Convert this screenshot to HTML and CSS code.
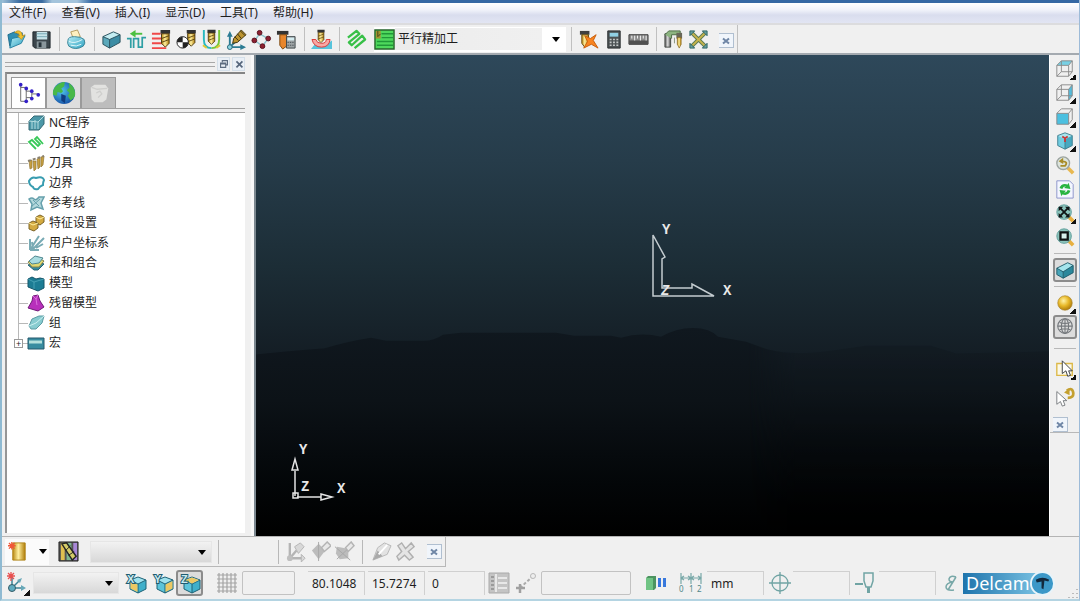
FILE: index.html
```html
<!DOCTYPE html>
<html lang="zh-CN">
<head>
<meta charset="utf-8">
<title>Delcam</title>
<link rel="stylesheet" href="styles.css">
</head>
<body>
<svg class="defs" aria-hidden="true">
  <defs>
    <linearGradient id="gold" x1="0" x2="1" y1="0" y2="0"><stop offset="0" stop-color="#b98a12"/><stop offset=".45" stop-color="#fff0a0"/><stop offset="1" stop-color="#b07c08"/></linearGradient>
    <linearGradient id="cyan" x1="0" x2="1" y1="0" y2="1"><stop offset="0" stop-color="#b8eef6"/><stop offset="1" stop-color="#2a9fc0"/></linearGradient>
    <linearGradient id="steel" x1="0" x2="1" y1="0" y2="0"><stop offset="0" stop-color="#555"/><stop offset=".5" stop-color="#ddd"/><stop offset="1" stop-color="#444"/></linearGradient>
    <radialGradient id="ball" cx=".4" cy=".35" r=".7"><stop offset="0" stop-color="#fff3a8"/><stop offset=".5" stop-color="#e8b828"/><stop offset="1" stop-color="#a87408"/></radialGradient>
    <radialGradient id="globe" cx=".4" cy=".4" r=".65"><stop offset="0" stop-color="#4fc4e8"/><stop offset="1" stop-color="#1450a8"/></radialGradient>
    <symbol id="tool" viewBox="0 0 12 20"><path d="M1 1h10v4H1z" fill="#333"/><path d="M2 5h8v10l-4 4-4-4z" fill="url(#gold)" stroke="#4a3810"/><path d="M2 10l8-3M2 14l8-3" stroke="#5a4510" fill="none"/></symbol>
    <symbol id="close" viewBox="0 0 14 14"><path d="M4 4.500l6 5M10 4.500l-6 5" stroke="#6f86a6" stroke-width="2"/></symbol>
    <symbol id="axiscube" viewBox="0 0 22 22"><path d="M13 5l8 3-8 4-8-4z" fill="#9fe2ee"/><path d="M5 8l8 4v9l-8-4z" fill="#5cc4da"/><path d="M21 8l-8 4v9l8-4z" fill="#3fafca"/><path d="M13 5l8 3v9l-8 4-8-4V8zM5 8l8 4 8-4M13 12v9" fill="none" stroke="#1c6277"/></symbol>
  </defs>
</svg>
<div class="window">
  <div class="titlebar"></div>
  <nav class="menubar" aria-label="菜单">
    <button>文件(F)</button><button>查看(V)</button><button>插入(I)</button><button>显示(D)</button><button>工具(T)</button><button>帮助(H)</button>
  </nav>

  <div class="toolbar" role="toolbar" aria-label="主工具栏">
    <button class="tb" aria-label="打开"><svg viewBox="0 0 22 22"><path d="M2 6l7-3 3 2 5-1v7L4 18z" fill="#2f8fb4" stroke="#1e6c8c"/><path d="M6 10l14-3-4 8-12 5z" fill="url(#cyan)" stroke="#2580a0"/><path d="M9 4c3-4 8-2 8 3l3-1-4 5-4-4 2 0c0-2-2-3-5-3z" fill="#f0c030" stroke="#b08010" stroke-width=".6"/></svg></button>
    <button class="tb" aria-label="保存"><svg viewBox="0 0 22 22"><path d="M2 3h18v17H4l-2-2z" fill="#3c464c" stroke="#20282c"/><path d="M6 3h11v8H6z" fill="#c8e4ea"/><path d="M6 5h11M6 8h11" stroke="#78a8b4"/><path d="M6 13h10v7H6z" fill="#8a979c"/><path d="M8 14h3v5H8z" fill="#26333a"/></svg></button>
    <i class="sep"></i>
    <button class="tb" aria-label="打印"><svg viewBox="0 0 22 22"><path d="M5 3l7-2 3 7-7 3z" fill="#fff0c0" stroke="#b39a60"/><path d="M2 12q0-4 7-4t10 3q2 4-1 7-8 5-15 0-2-3-1-6z" fill="url(#cyan)" stroke="#3c8496"/><path d="M3 13q6 3 14-2M5 17q6 2 11-1" stroke="#e4f8fa" fill="none"/></svg></button>
    <i class="sep"></i>
    <button class="tb" aria-label="毛坯"><svg viewBox="0 0 22 22"><path d="M2 8l11-5 7 3-11 5z" fill="#c4edf2"/><path d="M2 8l7 3v9l-7-4z" fill="#5ba8ba"/><path d="M9 11l11-5v8L9 20z" fill="#3c8ca4"/><path d="M2 8l11-5 7 3v8L9 20l-7-4zM2 8l7 3 11-5M9 11v9" stroke="#28505c" fill="none"/></svg></button>
    <button class="tb" aria-label="快进高度"><svg viewBox="0 0 22 22"><path d="M1 10h4v10M8 20V10h5v9h4V9h4" stroke="#2f9fa4" stroke-width="1.800" fill="none"/><path d="M8 5h9" stroke="#4cc040" stroke-width="2"/><path d="M10 1L4 5l6 4z" fill="#4cc040"/></svg></button>
    <button class="tb" aria-label="切入切出"><svg viewBox="0 0 22 22"><path d="M1 5h9M1 10h10M1 15h12M1 20h15" stroke="#f04848" stroke-width="2"/><use href="#tool" x="9" y="0" width="12" height="20"/></svg></button>
    <button class="tb" aria-label="开始点"><svg viewBox="0 0 22 22"><use href="#tool" x="10" y="0" width="12" height="19"/><circle cx="7" cy="14" r="6" fill="#fff" stroke="#222"/><path d="M7 8a6 6 0 0 0-6 6h6zM7 14h6a6 6 0 0 1-6 6z" fill="#222"/></svg></button>
    <button class="tb" aria-label="切削"><svg viewBox="0 0 22 22"><path d="M3 1v10q0 9 8 9" stroke="#28b8c0" stroke-width="2" fill="none"/><path d="M19 1v10q0 9-8 9" stroke="#78c838" stroke-width="2" fill="none"/><use href="#tool" x="5" y="0" width="12" height="17"/><path d="M2 17l4 3M20 17l-4 3" stroke="#e0c838" stroke-width="2"/></svg></button>
    <button class="tb" aria-label="刀轴"><svg viewBox="0 0 22 22"><path d="M4 19V6M4 19h15M4 19l7-7" stroke="#2c7c94" stroke-width="2"/><path d="M4 2L1 8h6zM21 19l-6-3v6z" fill="#2c7c94"/><circle cx="4" cy="19" r="2.500" fill="#8cd4e0" stroke="#246478"/><path d="M16 1l5 5-9 8-5 1 1-5z" fill="#bc9430" stroke="#403410"/><path d="M15 2l5 5M12 5l4 5M9 8l4 4" stroke="#403410"/></svg></button>
    <button class="tb" aria-label="点分布"><svg viewBox="0 0 22 22"><path d="M4 12l5-7M12 18l6-8M9 5l9 5M4 12l8 6" stroke="#8cc4cc" stroke-width="1.500"/><g fill="#8c2030" stroke="#58101c"><circle cx="9" cy="4" r="2.500"/><circle cx="18" cy="10" r="2.500"/><circle cx="3.500" cy="12" r="2.500"/><circle cx="12" cy="18" r="2.500"/></g></svg></button>
    <button class="tb" aria-label="进给率"><svg viewBox="0 0 22 22"><path d="M1 2h12v4H1z" fill="#343434"/><path d="M4 6h7v12l-4 3-3-4z" fill="#e8862c" stroke="#7c4810"/><path d="M11 8h9v12h-9z" fill="#9ea4a6" stroke="#40484c"/><path d="M12 9h7v3h-7z" fill="#d4ecf0"/><path d="M12 14h7M12 17h7" stroke="#485054" stroke-dasharray="1.500 1"/></svg></button>
    <i class="sep"></i>
    <button class="tb" aria-label="碰撞检查"><svg viewBox="0 0 22 22"><path d="M0 21l4-5h12l6-4v9z" fill="#58c4dc"/><path d="M1 11h4q1 4 6 4t5-4h4q-1 8-9 8T1 11z" fill="#f8a8a4" stroke="#d83838"/><use href="#tool" x="5" y="0" width="11" height="15"/></svg></button>
    <i class="sep"></i>
    <button class="tb" aria-label="刀具路径策略"><svg viewBox="0 0 22 22"><path d="M2 9L11 2l3 3L3 14l3 3L17 7l3 4L9 20" stroke="#38c048" stroke-width="2.400" stroke-linejoin="round" fill="none"/></svg></button>
    <div class="strategy">
      <svg viewBox="0 0 22 22"><path d="M1 1h20v20H1z" fill="#4ed85c" stroke="#28642c" stroke-width="1.500"/><path d="M8 5h12M8 9h12M3 13h17M3 17h17" stroke="#209838" stroke-width="1.500"/><path d="M2 2h5v8H2z" fill="#a49430"/><path d="M4 2v6l3-3" stroke="#40481c" fill="none"/></svg>
      <span class="combo"><select class="strategy-select" aria-label="策略"><option>平行精加工</option></select><svg class="caret" viewBox="0 0 8 5"><path d="M0 0h8L4 5z"/></svg></span>
    </div>
    <i class="sep"></i>
    <button class="tb" aria-label="删除刀具"><svg viewBox="0 0 22 22"><path d="M2 2h10v4H2z" fill="#404040"/><path d="M4 6h7v10l-4 3-3-4z" fill="url(#gold)" stroke="#684c10"/><path d="M7 7l6 3 6-4-3 6 5 8-7-4-8 4 4-7z" fill="#f88420" stroke="#c85c08"/></svg></button>
    <button class="tb" aria-label="计算器"><svg viewBox="0 0 22 22"><path d="M5 2h13v18H5z" fill="#4c5254" stroke="#282c2e"/><path d="M7 4h9v4H7z" fill="#90d0e4"/><path d="M7 11h9M7 14h9M7 17h9" stroke="#c4c8c8" stroke-width="1.600" stroke-dasharray="2 1.500"/></svg></button>
    <button class="tb" aria-label="测量"><svg viewBox="0 0 22 22"><path d="M1 6h20v10H1z" fill="#8c8c8c" stroke="#383838"/><path d="M1 12h20v4H1z" fill="#505050"/><path d="M4 7v3M7 7v5M10 7v3M13 7v5M16 7v3M19 7v5" stroke="#f4f4f4"/></svg></button>
    <i class="sep"></i>
    <button class="tb" aria-label="机床"><svg viewBox="0 0 22 22"><path d="M2 5h6v14H2z" fill="url(#steel)" stroke="#484c48"/><path d="M2 6l4-4h12v4H9v4" fill="#8cb480" stroke="#4c6c44"/><path d="M14 4h6v6h-6z" fill="#686858"/><path d="M15 9h4v7l-2 4-2-4z" fill="url(#gold)" stroke="#84641c" stroke-width=".7"/><path d="M12 9v6" stroke="#889480"/></svg></button>
    <button class="tb" aria-label="仿真"><svg viewBox="0 0 22 22"><path d="M4 4l14 14M18 4L4 18" stroke="#5c7c54" stroke-width="4"/><path d="M4 4l14 14M18 4L4 18" stroke="#c8b44c" stroke-width="2"/><path d="M2 2h5L2 7zM20 2v5l-5-5zM2 20v-5l5 5zM20 20h-5l5-5z" fill="#68a0a0" stroke="#2c6464"/></svg></button>
    <button class="mini" aria-label="关闭工具栏"><svg><use href="#close"/></svg></button>
    <i class="sep edge"></i>
  </div>

  <div class="workspace">
    <aside class="explorer">
      <div class="dock">
        <i class="grip"></i>
        <button class="dock-btn" aria-label="浮动"><svg viewBox="0 0 14 14"><path d="M5 5V3h6v5H9M3 6h6v5H3zM3 7h6" stroke="#5c6c80" stroke-width="1.300" fill="none"/></svg></button>
        <button class="dock-btn" aria-label="关闭"><svg viewBox="0 0 14 14"><path d="M4 4l7 7M11 4l-7 7" stroke="#56667c" stroke-width="2"/></svg></button>
      </div>
      <div class="pane">
        <div class="tabs" role="tablist">
          <button class="tab active" role="tab" aria-label="浏览器"><svg viewBox="0 0 26 26"><path d="M4 4v18h6M4 7h6v4h6M10 10v12M10 18h6M16 11v3h8M16 18v-4" fill="none" stroke="#666"/><g fill="#3420c8"><circle cx="4" cy="4" r="2"/><circle cx="10" cy="8" r="2"/><circle cx="16" cy="11" r="2"/><circle cx="23" cy="15" r="2"/><circle cx="16" cy="19" r="2"/><circle cx="10" cy="22" r="2"/></g></svg></button>
          <button class="tab" role="tab" aria-label="网络"><svg viewBox="0 0 26 26"><circle cx="13" cy="13" r="12" fill="url(#globe)"/><path d="M3 7q5-6 11-6l-1 5-3 2 2 3-2 2-4-1-1 4-4-1q-1-4 2-8zM18 2q6 4 7 10t-5 9l-3-5 2-3-3-3 3-3z" fill="#48b848"/><path d="M10 14l5 2-1 8-4-3z" fill="#103c80"/></svg></button>
          <button class="tab disabled" role="tab" aria-label="回收站"><svg viewBox="0 0 26 26"><path d="M4 7l4-3 12 0 3 4-2 12-4 3H8l-3-3z" fill="#e2e2e0"/><path d="M5 7l6 2 11-1M10 13l4-2 2 3-4 4" fill="none" stroke="#cfcfcd" stroke-width="1.500"/></svg></button>
        </div>
        <ul class="tree" role="tree">
          <li role="treeitem"><svg viewBox="0 0 18 18"><path d="M2 7l5-5 10 0v8l-5 6H2z" fill="#4c98a8" stroke="#346874"/><path d="M5 7v8M8 6v9M2 7l9 1 6-6M11 8v7" stroke="#b4dce0" fill="none"/></svg>NC程序</li>
          <li role="treeitem"><svg viewBox="0 0 18 18"><path d="M9 15L2 8l3-2 6 6 2-2-5-5 2-2 6 7" stroke="#38c858" stroke-width="1.800" fill="none"/></svg>刀具路径</li>
          <li role="treeitem"><svg viewBox="0 0 18 18"><path d="M2 7l3-1v8l-2 1zM6 7h3v8l-2 2zM10 5l3-1v9l-2 2zM14 3l3-1-1 9-2 2z" fill="#c8a040" stroke="#947838" stroke-width=".7"/><path d="M1 7l16-5" stroke="#888070" stroke-dasharray="3 2" stroke-width="2"/></svg>刀具</li>
          <li role="treeitem"><svg viewBox="0 0 18 18"><path d="M2 7q3-5 7-3 7-2 8 2-1 2-1 5-3 1-5 4-4 1-5-2-4-2-4-6z" fill="none" stroke="#389cb0" stroke-width="2"/></svg>边界</li>
          <li role="treeitem"><svg viewBox="0 0 18 18"><path d="M2 5q3-2 5 0t5-2h5l-3 6 2 6-6-2-6 3 1-6-3-5z" fill="#b4d8dc" stroke="#66a0ac" stroke-width="1.500"/><path d="M4 13l9-8M6 6l6 6" stroke="#66a0ac"/></svg>参考线</li>
          <li role="treeitem"><svg viewBox="0 0 18 18"><path d="M9 3l4-2 4 2v5l-4 3-4-2zM2 9l4-2 5 2v5l-4 3-5-2z" fill="#d4aa40" stroke="#7c6428"/><path d="M2 9l4 2 5-2M9 3l4 2 4-2" stroke="#fff0a0" fill="none"/></svg>特征设置</li>
          <li role="treeitem"><svg viewBox="0 0 18 18"><path d="M3 16V5M3 16h9M3 16L12 2M6 15l11-11M5 8l1 7M9 14l7-4" stroke="#78aab4" stroke-width="2" fill="none"/></svg>用户坐标系</li>
          <li role="treeitem"><svg viewBox="0 0 18 18"><path d="M1 11l9-4 7 3-6 6-4 0z" fill="#348ca0" stroke="#286474"/><path d="M1 8l9-5 7 4-5 6-7 0z" fill="#e0d870" stroke="#84844c"/><path d="M2 7l6-5 8 2-4 5-7 1z" fill="#a8dce0" stroke="#508890"/></svg>层和组合</li>
          <li role="treeitem"><svg viewBox="0 0 18 18"><path d="M1 5l4-2 4 2 4-1 4 1v9l-6 3-10-4z" fill="#1c7c94" stroke="#145468"/><path d="M1 5l6 3 10-3M7 8v7" stroke="#60b8c8" stroke-opacity=".6" fill="none"/></svg>模型</li>
          <li role="treeitem"><svg viewBox="0 0 18 18"><path d="M6 2l5-1 2 6 4 6-6 4-10-3 4-7z" fill="#b830bc" stroke="#701c78"/><path d="M6 2l3 3 2-4M9 5l1 6" stroke="#dc70dc" fill="none"/></svg>残留模型</li>
          <li role="treeitem"><svg viewBox="0 0 18 18"><path d="M2 12l3-7 7-3h5l-2 7-6 6H4z" fill="#88ccd0" stroke="#5c9ca4"/><path d="M2 12l7-3 8-7" stroke="#ccf0f0" fill="none"/></svg>组</li>
          <li role="treeitem" class="last" aria-expanded="false"><button class="expander" aria-label="展开">+</button><svg viewBox="0 0 18 18"><path d="M1 4h16v11H1z" fill="#388ca0" stroke="#24586c"/><path d="M2 8h13" stroke="#b4e0dc" stroke-width="3"/></svg>宏</li>
        </ul>
      </div>
    </aside>

    <main class="view">
      <svg class="horizon" viewBox="0 0 793 215" preserveAspectRatio="none"><defs><linearGradient id="ground" x1="0" x2="0" y1="0" y2="1"><stop offset="0" stop-color="#10181f"/><stop offset=".35" stop-color="#0c1217"/><stop offset=".75" stop-color="#030608"/><stop offset="1" stop-color="#000"/></linearGradient></defs><path d="M0 31Q50 26 68 25Q90 18 115 14L130 17H165Q177 18 187 11L205 9H300L318 12H355L365 14Q385 8 405 13Q420 4 437 4T462 13L490 18L512 26Q535 32 570 28L610 22H675L700 30L793 28V215H0z" fill="url(#ground)"/></svg>
      <svg class="workplane" viewBox="0 0 90 80" aria-label="坐标系"><g fill="none" stroke="#c4ccd0" stroke-width="1.500"><path d="M4 12V73H65L43 61V65H13V36L16 34Z"/></g><g class="axis-text"><text x="13" y="11">Y</text><text x="74" y="72">X</text><text x="12" y="72" font-style="italic">Z</text></g></svg>
      <svg class="triad" viewBox="0 0 60 66" aria-label="视图方向"><g fill="none" stroke="#e4e4e4" stroke-width="1.500"><path d="M6 55V30M8 56H32M3 29L6 18L9 29ZM32 53L43 56L32 59ZM4 52h5v5H4z"/></g><g class="axis-text"><text x="10" y="13">Y</text><text x="12" y="50">Z</text><text x="48" y="52">X</text></g></svg>
    </main>

    <div class="viewbar" role="toolbar" aria-label="查看工具栏" aria-orientation="vertical">
      <button class="vb more" aria-label="顶视图"><svg viewBox="0 0 22 22"><path d="M2 7l5-5h12l-4 5z" fill="#78d0e4"/><path d="M2 7h13v12H2zM2 7l5-5h12l-4 5M19 2v12l-4 5M7 2v12L2 19M7 14h12" fill="none" stroke="#888"/></svg></button>
      <button class="vb more" aria-label="右视图"><svg viewBox="0 0 22 22"><path d="M15 7l4-5v12l-4 5z" fill="#54bcdc"/><path d="M2 7h13v12H2zM2 7l5-5h12l-4 5M19 2v12l-4 5M7 2v12L2 19M7 14h12" fill="none" stroke="#888"/></svg></button>
      <button class="vb more" aria-label="前视图"><svg viewBox="0 0 22 22"><path d="M2 7h13v12H2z" fill="#4cc0e0"/><path d="M2 7h13v12H2zM2 7l5-5h12l-4 5M19 2v12l-4 5" fill="none" stroke="#888"/></svg></button>
      <button class="vb more" aria-label="等轴视图"><svg viewBox="0 0 22 22"><path d="M11 2l8 3-8 4-8-4z" fill="#a8e4ec"/><path d="M3 5l8 4v11l-8-4z" fill="#70cce0"/><path d="M19 5l-8 4v11l8-4z" fill="#48a8c0"/><path d="M11 2l8 3v11l-8 4-8-4V5zM11 9v11" fill="none" stroke="#3c7c8c"/><path d="M11 8v4M8 6l3 2 3-2" stroke="#c83838" stroke-width="2" fill="none"/></svg></button>
      <button class="vb" aria-label="上一视图"><svg viewBox="0 0 22 22"><path d="M14 14l6 6" stroke="#e8b850" stroke-width="4"/><circle cx="9" cy="9" r="7" fill="#dce4dc" stroke="#9ca4a0" stroke-width="1.500"/><path d="M6 12h5q4-5-3-5" fill="none" stroke="#a88c28" stroke-width="2"/><path d="M4 7l5-4v7z" fill="#a88c28"/></svg></button>
      <button class="vb" aria-label="刷新"><svg viewBox="0 0 22 22"><path d="M2 2h14l4 4v15H2z" fill="#f4f6ff" stroke="#8890c8"/><path d="M5 10q2-6 9-4l1-2 2 7-7-1 2-2q-3 0-4 3zM17 13q-2 6-9 4l-1 2-2-7 7 1-2 2q3 0 4-3z" fill="#28b440"/></svg></button>
      <button class="vb more" aria-label="全屏重画"><svg viewBox="0 0 22 22"><path d="M15 15l5 5" stroke="#e8b040" stroke-width="4"/><circle cx="10" cy="10" r="8" fill="#8cc4bc" stroke="#5c9c98"/><path d="M6 6l8 8M14 6l-8 8" stroke="#101414" stroke-width="2"/><path d="M4 4h5L4 9zM16 4v5l-5-5zM4 16v-5l5 5zM16 16h-5l5-5z" fill="#101414"/></svg></button>
      <button class="vb" aria-label="方框放大"><svg viewBox="0 0 22 22"><path d="M15 15l5 5" stroke="#e8b040" stroke-width="4"/><circle cx="10" cy="10" r="8" fill="#8cc4bc" stroke="#5c9c98"/><path d="M6 6h8v8H6z" fill="#d8f0ec" stroke="#101414" stroke-width="2.500"/></svg></button>
      <i class="rule"></i>
      <button class="vb pressed" aria-label="显示毛坯"><svg viewBox="0 0 22 22"><path d="M2 9l12-6 6 3-11 7z" fill="#a4e4ec"/><path d="M2 9l7 4v7l-7-4z" fill="#48a4b8"/><path d="M9 13l11-7v8L9 20z" fill="#2c889c"/><path d="M2 9l12-6 6 3v8L9 20l-7-4zM2 9l7 4 11-7M9 13v7" fill="none" stroke="#1c5868"/></svg></button>
      <i class="rule"></i>
      <button class="vb more" aria-label="阴影"><svg viewBox="0 0 22 22"><circle cx="11" cy="11" r="8" fill="url(#ball)" stroke="#a88430" stroke-width=".7"/></svg></button>
      <button class="vb pressed" aria-label="线框"><svg viewBox="0 0 22 22"><g fill="none" stroke="#74787c" stroke-width="1.200"><circle cx="11" cy="10" r="8"/><ellipse cx="11" cy="10" rx="4" ry="8"/><path d="M11 2v16M3 10h16M5 6q6 2 12 0M5 14q6-2 12 0"/></g></svg></button>
      <i class="rule wide"></i>
      <button class="vb more" aria-label="方框选择"><svg viewBox="0 0 22 22"><path d="M2 5h17v13H2z" fill="#fbf8e8" stroke="#dcb848" stroke-width="1.500"/><path d="M8 2v14l4-3 2 6 3-1-2-5h4z" fill="#fff" stroke="#303438"/></svg></button>
      <button class="vb" aria-label="撤销选择"><svg viewBox="0 0 22 22"><path d="M13 4q6-4 7 2t-6 6" fill="none" stroke="#c4a030" stroke-width="3"/><path d="M10 6l6-5v8z" fill="#c4a030"/><path d="M2 5v14l4-3 2 5 3-1-2-5h4z" fill="#fff" stroke="#74787c"/></svg></button>
      <button class="mini" aria-label="关闭查看工具栏"><svg><use href="#close"/></svg></button>
      <i class="endline"></i>
    </div>
  </div>

  <div class="toolrow">
    <div class="tooldock" role="toolbar" aria-label="刀具工具栏">
      <button class="sb drop" aria-label="产生刀具"><svg viewBox="0 0 22 22"><path d="M5 2h13v18H5z" fill="url(#gold)" stroke="#b08418"/><path d="M0 5h8M4 1v8M1 2l6 6M7 2L1 8" stroke="#f05838" stroke-width="1.400"/></svg><svg class="caret" viewBox="0 0 8 5"><path d="M0 0h8L4 5z"/></svg></button>
      <button class="sb" aria-label="刀具数据库"><svg viewBox="0 0 22 22"><path d="M1 1h20v20H1z" fill="#555" stroke="#222"/><path d="M3 2h4v18H3z" fill="#e0c050"/><path d="M9 2h5v18H9z" fill="#80b890"/><path d="M16 2h4v18h-4z" fill="#a888d8"/><path d="M4 3l5-1 10 14-4 4z" fill="#d4cc68" stroke="#242424" stroke-width="1.500"/><path d="M8 10l5-5M11 15l6-4" stroke="#242424"/></svg></button>
      <span class="combo"><select class="grad tool-select" aria-label="刀具"><option></option></select><svg class="caret" viewBox="0 0 8 5"><path d="M0 0h8L4 5z"/></svg></span>
      <i class="vline"></i><i class="void"></i><i class="vline"></i>
      <button class="sb" disabled aria-label="变换坐标系"><svg viewBox="0 0 22 22"><path d="M4 2v16h15M4 18l7-8" fill="none" stroke="#b4b4b4" stroke-width="2.500"/><circle cx="4" cy="18" r="3" fill="#bebebe"/><path d="M9 6l6-4 4 4-6 7zM16 14l4 4-4 4z" fill="#d8d8d8" stroke="#b4b4b4"/></svg></button>
      <button class="sb" disabled aria-label="编辑坐标系"><svg viewBox="0 0 22 22"><path d="M9 3l7 7-7 9-7-9z" fill="#bcbcbc"/><path d="M9 1v20" stroke="#a8a8a8"/><path d="M12 7l6-6 4 4-7 6z" fill="#e8e8e8" stroke="#b4b4b4" stroke-width="1.500"/></svg></button>
      <button class="sb" disabled aria-label="移动坐标系"><svg viewBox="0 0 22 22"><path d="M3 6l12 2v10l-9 1-4-6z" fill="#bcbcbc"/><path d="M1 6l16 14M3 19L17 6" stroke="#a8a8a8"/><path d="M12 7l6-6 3 4-6 6z" fill="#e8e8e8" stroke="#b4b4b4" stroke-width="1.500"/></svg></button>
      <i class="vline inset"></i>
      <button class="sb" disabled aria-label="编辑"><svg viewBox="0 0 22 22"><path d="M2 20l5-13 7-5 7 3-4 9z" fill="#e2e2e2" stroke="#b8b8b8"/><path d="M2 20l5-10 5 6z" fill="#aaa"/><path d="M8 14L17 4" stroke="#fff" stroke-width="2"/></svg></button>
      <button class="sb" disabled aria-label="删除"><svg viewBox="0 0 22 22"><path d="M3 5l4-3 4 6 6-6 3 4-6 5 5 6-4 3-5-5-6 5-2-4 5-5z" fill="#e4e4e4" stroke="#b0b0b0" stroke-width="1.500"/></svg></button>
      <button class="mini" aria-label="关闭刀具工具栏"><svg><use href="#close"/></svg></button>
    </div>
  </div>

  <footer class="status">
    <button class="st more" aria-label="用户坐标系"><svg viewBox="0 0 22 22"><path d="M6 16V6M6 16h12M6 16l8-8" fill="none" stroke="#3c8498" stroke-width="1.500"/><path d="M20 16l-5-3v6zM16 6l-5 2 3 3z" fill="#68a8b8"/><circle cx="6" cy="16" r="3.500" fill="#60acc0" stroke="#345c68"/><path d="M1 4h8M5 0v9M2 1l6 6M8 1L2 7" stroke="#e85050" stroke-width="1.300"/></svg></button>
    <span class="combo cs"><select class="grad cs-select" aria-label="激活坐标系"><option></option></select><svg class="caret" viewBox="0 0 8 5"><path d="M0 0h8L4 5z"/></svg></span>
    <button class="st" aria-label="X 平面"><svg viewBox="0 0 22 22"><use href="#axiscube"/><path d="M5.500 9l7 3.500v7.500l-7-3.500z" fill="#ecc864"/><text x="2" y="11" class="cube-text">X</text></svg></button>
    <button class="st" aria-label="Y 平面"><svg viewBox="0 0 22 22"><use href="#axiscube"/><path d="M20.500 9l-7 3.500v7.500l7-3.500z" fill="#ecc864"/><text x="2" y="11" class="cube-text">Y</text></svg></button>
    <button class="st pressed" aria-label="Z 平面"><svg viewBox="0 0 22 22"><use href="#axiscube"/><path d="M13 5.500l7 2.500-7 3.500L6 8z" fill="#ecc864"/><text x="2" y="11" class="cube-text">Z</text></svg></button>
    <button class="st grid" aria-label="栅格"><svg viewBox="0 0 22 22"><path d="M1 3h20M1 7h20M1 11h20M1 15h20M1 19h20M3 1v20M7 1v20M11 1v20M15 1v20M19 1v20" stroke="#a4a4a4" stroke-width="1.200"/></svg></button>
    <input class="box small" aria-label="栅格间距">
    <div class="coords">
      <input class="field" aria-label="X 坐标" value="80.1048"><input class="field" aria-label="Y 坐标" value="15.7274"><input class="field" aria-label="Z 坐标" value="0">
    </div>
    <button class="st" disabled aria-label="位置"><svg viewBox="0 0 22 22"><path d="M1 1h20v20H1z" fill="#c4c4c4" stroke="#aaa"/><path d="M8 2v18M10 6h9M10 11h9M10 16h9" stroke="#e8e8e8" stroke-width="2"/><path d="M3 5h3M3 9h3M3 13h3M3 17h3" stroke="#8c8c8c" stroke-width="1.500"/></svg></button>
    <button class="st" disabled aria-label="点到点"><svg viewBox="0 0 22 22"><path d="M5 16L17 5" stroke="#aaa" stroke-dasharray="3 2" stroke-width="2"/><path d="M5 12v9M1 16h9" stroke="#a0a0a0" stroke-width="2.500"/><circle cx="18" cy="4" r="2.500" fill="#eee" stroke="#b8b8b8"/></svg></button>
    <input class="box large" aria-label="命令">
    <button class="st run" aria-label="运行状态"><svg viewBox="0 0 22 22"><path d="M1 6l2-2h8v12l-2 2H1z" fill="#4c9460"/><path d="M1 6h7v12H1z" fill="#70c484"/><path d="M13 6h3v9h-3zM18 6h3v9h-3z" fill="#3878dc"/></svg></button>
    <label class="st wide" for="units"><svg viewBox="0 0 24 22"><path d="M2 1v11M12 1v11M22 1v11M2 6h20M5 4L2 6l3 2M9 4l3 2-3 2M15 4l-3 2 3 2M19 4l3 2-3 2" fill="none" stroke="#78a8a8" stroke-width="1.200"/><g class="scale-text"><text x="0" y="20">0</text><text x="10" y="20">1</text><text x="18" y="20">2</text></g></svg></label>
    <input class="field" id="units" aria-label="单位" value="mm">
    <label class="st" for="tol"><svg viewBox="0 0 22 22"><g fill="none" stroke="#70a4a4" stroke-width="1.300"><circle cx="11" cy="11" r="8"/><path d="M11 0v22M0 11h22"/></g></svg></label>
    <input class="field" id="tol" aria-label="公差">
    <label class="st" for="thick"><svg viewBox="0 0 22 22"><path d="M0 12h8" stroke="#70a4a4" stroke-width="2"/><path d="M9 1h9v8l-2 6h-5l-2-6z" fill="none" stroke="#70a4a4" stroke-width="1.500"/><path d="M13.500 15v6" stroke="#70a4a4" stroke-width="3"/></svg></label>
    <input class="field" id="thick" aria-label="余量">
    <button class="st narrow" aria-label="刀具直径"><svg viewBox="0 0 22 22"><path d="M16 5q-6-2-7 2 0 3 4 3-7 1-7 5t8 3M16 5l-8 13" fill="none" stroke="#78a8a8" stroke-width="1.500"/></svg></button>
    <div class="brand"><span>Delcam</span><svg viewBox="0 0 26 26"><circle cx="13" cy="13" r="12" fill="#3c98c8" stroke="#e8f4fa" stroke-width="2"/><path d="M6 9q7-4 14 0l-1 2-4-1-1 9-2-1V11l-5 1z" fill="#12283c"/></svg></div>
    <svg class="resize" viewBox="0 0 12 12"><path d="M10 2v1M10 6v1M10 10v1M6 6v1M6 10v1M2 10v1" stroke="#bbb" stroke-width="2"/></svg>
  </footer>
</div>
</body>
</html>
```
FILE: styles.css
```css
* { box-sizing: border-box; }

body {
  margin: 0;
  font-family: "Noto Sans", "Noto Sans CJK SC", sans-serif;
  font-size: 12px;
  line-height: 16px;
  color: #1e1e1e;
}

button, input, select {
  margin: 0;
  padding: 0;
  border: 0;
  background: none;
  font: inherit;
  color: inherit;
  border-radius: 0;
}

svg { display: block; flex: none; }
.defs { position: absolute; width: 0; height: 0; }

.window {
  display: flex;
  flex-direction: column;
  min-height: 100vh;
  background: #f0f0f0;
  border-left: 2px solid #8fbad2;
  border-right: 1px solid #9dbbd8;
  border-bottom: 2px solid #b4d4e2;
}

.titlebar {
  height: 3px;
  background: linear-gradient(90deg, #9dc0d8 0, #3a6ba0 18px, #3a6ba0 40px, #a4c4dc 50px, #a4c4dc 75px, #3568a4 90px);
}

/* menu */
.menubar {
  display: flex;
  gap: 1px;
  height: 22px;
  background: linear-gradient(#fff 0, #f0f2fa 35%, #d9ddee 60%, #e2e5f3 100%);
  border-bottom: 2px solid #dcdcde;
}
.menubar button { padding: 0 7px; }

/* main toolbar */
.toolbar {
  display: flex;
  align-items: center;
  height: 30px;
  padding-left: 2px;
  border-bottom: 2px solid #a4aab0;
}
.tb {
  width: 25px;
  height: 26px;
  display: flex;
  align-items: center;
  justify-content: center;
}
.tb svg, .strategy > svg { width: 21px; height: 21px; }
.sep {
  width: 10px;
  height: 24px;
  background: linear-gradient(#c0c0c0, #c0c0c0) center / 1px 100% no-repeat;
}
.sep.edge { height: 28px; width: 6px; }

.strategy {
  display: flex;
  align-items: center;
  margin-left: 5px;
  height: 25px;
  width: 192px;
  background: #fff;
}
.combo { display: flex; position: relative; }
.strategy .combo { flex: 1; }
.combo select { appearance: none; height: 22px; width: 100%; }
.combo .caret {
  position: absolute;
  right: 6px;
  top: 50%;
  margin-top: -2px;
  pointer-events: none;
}
.caret { width: 8px; height: 5px; fill: #000; }
.strategy .strategy-select {
  padding: 0 24px 0 3px;
  background: linear-gradient(90deg, #ececec, #f0f0f0) left / calc(100% - 24px) 100% no-repeat;
}

.mini {
  width: 15px;
  height: 15px;
  background: #f0f5fb;
  border: solid #b0bfd0;
  border-width: 1px 1px 1px 0;
}
.mini svg { width: 14px; height: 14px; }
.toolbar .mini { margin: 2px 0 0 8px; }

/* middle area */
.workspace { display: flex; flex: 1; min-height: 0; }

.explorer {
  width: 254px;
  flex: none;
  display: flex;
  flex-direction: column;
  padding: 1px 9px 3px 3px;
  border-right: 2px solid #7c8890;
  box-shadow: inset -3px 0 #f8f8f8;
}
.dock { display: flex; align-items: center; gap: 2px; height: 16px; }
.grip {
  flex: 1;
  height: 5px;
  border: solid #a8a8a8;
  border-width: 1px 0;
}
.dock-btn {
  width: 13px;
  height: 14px;
  background: #e9eff6;
  border: 1px solid #d4dfe9;
}
.dock-btn svg { width: 12px; height: 12px; }
.pane {
  flex: 1;
  display: flex;
  flex-direction: column;
  border-top: 2px solid #848484;
  border-left: 2px solid #969696;
}
.tabs {
  display: flex;
  padding: 3px 0 0 4px;
  border-bottom: 1px solid #a0a0a0;
}
.tab {
  width: 35px;
  height: 31px;
  display: flex;
  align-items: center;
  justify-content: center;
  border: solid #9a9a9a;
  border-width: 1px 1px 0;
  background: #dedede;
}
.tab svg { width: 24px; height: 24px; }
.tab.active { background: #fff; }
.tab.disabled { background: #bdbdbd; }

.tree {
  flex: 1;
  list-style: none;
  margin: 3px 0 0;
  padding: 0;
  background: #fff;
  border-top: 1px solid #a8a8a8;
}
.tree li {
  display: flex;
  align-items: center;
  gap: 4px;
  height: 20px;
  padding-left: 20px;
  background:
    linear-gradient(#b8b8b8, #b8b8b8) 11px 0 / 1px 100% no-repeat,
    linear-gradient(#b8b8b8, #b8b8b8) 11px 10px / 10px 1px no-repeat;
}
.tree li.last {
  padding-left: 7px;
  background-size: 1px 10px, 10px 1px;
}
.tree svg { width: 18px; height: 18px; }
.expander {
  width: 9px;
  height: 9px;
  border: 1px solid #999;
  background: #fff;
  font-size: 9px;
  line-height: 7px;
}

/* 3D view */
.view {
  flex: 1;
  min-width: 0;
  position: relative;
  overflow: hidden;
  background: linear-gradient(#2e485a 0, #263c4a 22%, #1c2d36 44%, #17232b 56%, #131c23 64%, #06090c 82%, #000 95%);
}
.horizon {
  position: absolute;
  left: 0;
  bottom: 0;
  width: 100%;
  height: 44%;
  mask-image: linear-gradient(90deg, #000 62%, rgba(0, 0, 0, .4) 68%);
}
.workplane { position: absolute; left: 49%; top: 35%; margin: 0 0 0 4px; width: 90px; height: 80px; }
.triad { position: absolute; left: 33px; bottom: 29px; width: 60px; height: 66px; }
.axis-text {
  font-family: "Liberation Mono", monospace;
  font-size: 14px;
  font-weight: 700;
  fill: #e8e8e8;
}

/* right toolbar */
.viewbar {
  width: 30px;
  flex: none;
  display: flex;
  flex-direction: column;
  align-items: center;
  padding-top: 2px;
  border-left: 1px solid #fff;
}
.vb {
  width: 24px;
  height: 24px;
  display: flex;
  align-items: center;
  justify-content: center;
  border: 1px solid transparent;
}
.vb svg { width: 20px; height: 20px; }
.pressed { background: #dcdcdc; border: 2px solid #8c8c8c; border-radius: 3px; }
.more { background: linear-gradient(135deg, transparent 50%, #111 50%) right bottom / 6px 6px no-repeat; }
.rule {
  width: 22px;
  height: 9px;
  background: linear-gradient(#b8b8b8, #b8b8b8) center / 100% 1px no-repeat;
}
.rule.wide { height: 18px; }
.rule.wide + .vb { margin-bottom: 4px; }
.viewbar .mini { margin: 8px 8px 0 0; }
.endline { width: 100%; border-top: 1px solid #b8b8b8; }

/* tool row */
.toolrow { display: flex; height: 31px; border-top: 1px solid #b4b4b4; }
.tooldock {
  display: flex;
  align-items: center;
  padding-left: 3px;
  padding-right: 3px;
  border: solid #b8b8b8;
  border-width: 0 1px 1px 0;
}
.sb {
  width: 24px;
  height: 26px;
  display: flex;
  align-items: center;
  justify-content: center;
}
.sb svg { width: 21px; height: 21px; }
.sb.drop { width: 44px; gap: 10px; background: #fbfbfb; }
.sb.drop .caret { width: 8px; height: 5px; }
.sb.drop + .sb { margin: 0 10px 0 7px; }
.combo .grad {
  background: linear-gradient(#f2f2f2, #d8d8d8);
  border: 1px solid #e6e6e6;
}
.tool-select { min-width: 122px; }
.vline { width: 1px; height: 24px; margin-left: 6px; background: #b8b8b8; }
.void { width: 53px; }
.void + .vline { margin-right: 5px; }
.vline.inset { margin-right: 6px; }
.tooldock .mini { margin: 0 0 0 10px; }

/* status bar */
.status {
  display: flex;
  align-items: center;
  height: 32px;
  padding-left: 1px;
}
.st {
  width: 27px;
  height: 26px;
  flex: none;
  display: flex;
  align-items: center;
  justify-content: center;
}
.st svg { width: 22px; height: 22px; overflow: visible; }
.st.wide svg { width: 24px; height: 22px; }
.st.grid { margin-left: 10px; }
.st.run { margin: 0 8px 0 11px; }
.st.wide { margin-right: 3px; }
.combo.cs { margin: 0 3px; }
.cs-select { min-width: 86px; }
.cube-text {
  font-family: "Liberation Sans", sans-serif;
  font-size: 11px;
  font-weight: 700;
  fill: #c8eaf0;
  stroke: #205c70;
  stroke-width: 2px;
  paint-order: stroke;
}
.scale-text { font-size: 8px; fill: #508888; }
.box {
  height: 24px;
  border: 1px solid #c2c2c2;
  border-radius: 2px;
  margin-left: 2px;
  padding: 0 4px;
}
.box.small { width: 53px; }
.box.large { width: 90px; }
.coords { display: flex; gap: 3px; margin-left: 13px; }
.field {
  width: 57px;
  height: 24px;
  padding: 0 0 0 4px;
  border: solid #d0d0d0;
  border-width: 1px 1px 0 0;
}
label + .field { margin-right: 2px; }
.st.narrow { width: 25px; }

.brand {
  display: flex;
  align-items: center;
  height: 21px;
  padding-left: 3px;
  background: linear-gradient(90deg, #1f74ac, #7cc4e4) left / calc(100% - 13px) 100% no-repeat;
  color: #fff;
  font-size: 18px;
  line-height: 21px;
}
.brand svg { width: 25px; height: 25px; }
.resize { width: 12px; height: 12px; margin-left: auto; align-self: flex-end; }
```
